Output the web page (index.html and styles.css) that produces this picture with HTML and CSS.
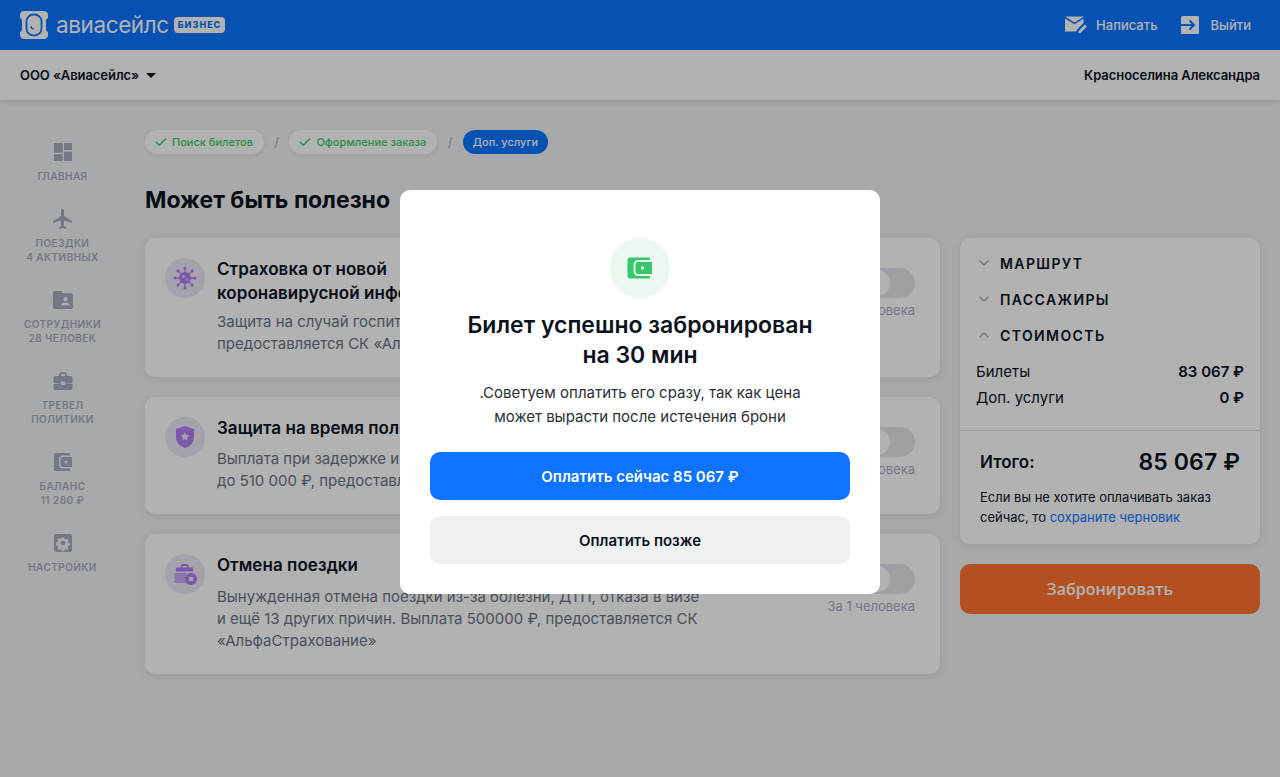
FILE: index.html
```html
<!DOCTYPE html>
<html lang="ru">
<head>
<meta charset="utf-8">
<title>Авиасейлс Бизнес</title>
<link rel="stylesheet" href="styles.css">
</head>
<body>
<header class="topbar">
  <div class="brand">
    <svg class="brand-mark" width="28" height="28" viewBox="0 0 28 28">
      <path fill="#fff" d="M4 0h20c2 0 4 1.500 4 4v3c-1.500.5-2 1.500-2 3v8c0 1.500.5 2.500 2 3v3c0 2.500-2 4-4 4H4c-2 0-4-1.500-4-4v-3c1.500-.5 2-1.500 2-3v-8c0-1.500-.5-2.500-2-3V4c0-2.500 2-4 4-4z"/>
      <rect x="6.500" y="3.500" width="15" height="21" rx="7" fill="none" stroke="#0b75ff" stroke-width="1.800"/>
      <path fill="none" stroke="#0b75ff" stroke-width="1.200" d="M11 15c0 2 1.200 3 3 3"/>
    </svg>
    <span class="brand-name">авиасейлс</span>
    <span class="brand-badge">БИЗНЕС</span>
  </div>
  <nav class="top-actions">
    <a class="top-action top-action-mail">
      <svg width="22" height="20" viewBox="0 0 22 20"><path fill="#fff" d="M0 1.500h19L9.500 7.500z"/><path fill="#fff" d="M0 3.500v13h11l1.500-2.500 6-6V3.500L9.500 9.300z"/><path fill="#fff" d="M13.500 16l6.500-6.500 2 2-6.500 6.500H13.500z"/></svg>
      <span>Написать</span>
    </a>
    <a class="top-action">
      <svg width="18" height="18" viewBox="0 0 18 18"><rect width="18" height="18" rx="1.500" fill="#fff"/><path fill="none" stroke="#0b75ff" stroke-width="2" d="M0 9h12M8.500 4.500 13 9l-4.500 4.500"/></svg>
      <span>Выйти</span>
    </a>
  </nav>
</header>

<div class="subbar">
  <div class="company">ООО «Авиасейлс» <i class="caret"></i></div>
  <div class="user">Красноселина Александра</div>
</div>

<main class="layout">
  <nav class="sidenav">
    <a class="nav-item">
      <span class="nav-icon"><svg width="18" height="18" viewBox="0 0 18 18"><path d="M0 0h8.700v9.700H0zM10 0h8v7h-8zM0 11.300h8.700V18H0zM10 8.700h8V18h-8z"/></svg></span>
      <span class="nav-label">Главная</span>
    </a>
    <a class="nav-item">
      <span class="nav-icon"><svg width="24" height="24" viewBox="0 0 24 24"><path d="M21 16v-2l-8-5V3.500c0-.83-.67-1.500-1.500-1.500S10 2.670 10 3.500V9l-8 5v2l8-2.500V19l-2 1.500V22l3.500-1 3.500 1v-1.500L13 19v-5.500l8 2.500z"/></svg></span>
      <span class="nav-label">Поездки<br>4 активных</span>
    </a>
    <a class="nav-item">
      <span class="nav-icon"><svg width="24" height="24" viewBox="0 0 24 24"><path d="M10 3l2 2.200h8c1.100 0 2 .9 2 2V19c0 1.100-.9 2-2 2H4c-1.100 0-2-.9-2-2V5c0-1.100.9-2 2-2z"/><circle class="nav-cut" cx="14.500" cy="11" r="2.200"/><path class="nav-cut" d="M10 17.500c0-2 2.500-3 4.500-3s4.500 1 4.500 3z"/></svg></span>
      <span class="nav-label">Сотрудники<br>28 человек</span>
    </a>
    <a class="nav-item">
      <span class="nav-icon"><svg width="24" height="24" viewBox="0 0 24 24"><path d="M10 16v-1H2.500v4c0 1.100.9 2 2 2h15c1.100 0 2-.9 2-2v-4H14v1zM19.500 7H16V5l-2-2h-4L8 5v2H4.500c-1.100 0-2 .9-2 2v3.500c0 1.100.9 2 2 2H10v-2h4v2h5.500c1.100 0 2-.9 2-2V9c0-1.100-.9-2-2-2zM14 7h-4V5h4z"/></svg></span>
      <span class="nav-label">Тревел<br>политики</span>
    </a>
    <a class="nav-item">
      <span class="nav-icon"><svg width="20" height="20" viewBox="0 0 20 20"><path d="M3 1h14v2.500H9.500C7.500 3.500 6 5 6 7v6c0 2 1.500 3.500 3.500 3.500H17V19H3c-1.100 0-2-.9-2-2V3c0-1.100.9-2 2-2z"/><path d="M9.500 5H19v10H9.500C8.500 15 7.500 14 7.500 13V7c0-1 1-2 2-2z"/><circle class="nav-cut" cx="13" cy="10" r="1.500"/></svg></span>
      <span class="nav-label">Баланс<br>11 280 ₽</span>
    </a>
    <a class="nav-item">
      <span class="nav-icon"><svg width="20" height="20" viewBox="0 0 20 20"><rect x="1" y="1" width="18" height="18" rx="2"/><path class="nav-cut" d="M8.700 3.500h2.600l.4 1.900 1.400.6 1.700-1 1.800 1.800-1 1.700.6 1.400 1.900.4v2.600l-1.900.4-.6 1.400 1 1.700-1.800 1.800-1.700-1-1.400.6-.4 1.900H8.700l-.4-1.900-1.400-.6-1.700 1-1.800-1.800 1-1.700-.6-1.400-1.900-.4V9.300l1.900-.4.6-1.400-1-1.700 1.800-1.800 1.700 1 1.400-.6z" transform="translate(1.400 1.400) scale(.86)"/><circle cx="10" cy="10" r="2.300"/></svg></span>
      <span class="nav-label">Настройки</span>
    </a>
  </nav>

  <section class="content">
    <ol class="crumbs">
      <li class="crumb crumb-done"><svg width="12" height="10" viewBox="0 0 12 10"><path fill="none" stroke="currentColor" stroke-width="1.500" d="M1 5l3.300 3.300L11 1.500"/></svg>Поиск билетов</li>
      <li class="crumb-sep">/</li>
      <li class="crumb crumb-done"><svg width="12" height="10" viewBox="0 0 12 10"><path fill="none" stroke="currentColor" stroke-width="1.500" d="M1 5l3.300 3.300L11 1.500"/></svg>Оформление заказа</li>
      <li class="crumb-sep">/</li>
      <li class="crumb crumb-active">Доп. услуги</li>
    </ol>

    <h1 class="page-title">Может быть полезно</h1>

    <div class="columns">
      <div class="offers">
        <article class="offer offer-tight">
          <span class="offer-icon">
            <svg width="24" height="24" viewBox="0 0 24 24"><g fill="none" stroke="#b07ff5" stroke-width="1.300"><path d="M12 1.500v21M1.500 12h21M4.600 4.600l14.800 14.800M19.400 4.600 4.600 19.400"/></g><g fill="#b07ff5"><circle cx="12" cy="12" r="6"/><circle cx="12" cy="2" r="1.600"/><circle cx="12" cy="22" r="1.600"/><circle cx="2" cy="12" r="1.600"/><circle cx="22" cy="12" r="1.600"/><circle cx="4.900" cy="4.900" r="1.600"/><circle cx="19.100" cy="4.900" r="1.600"/><circle cx="4.900" cy="19.100" r="1.600"/><circle cx="19.100" cy="19.100" r="1.600"/></g><circle cx="10.500" cy="10.500" r="1.300" fill="#eee9f6"/><circle cx="14" cy="13.500" r="1" fill="#eee9f6"/></svg>
          </span>
          <div class="offer-body">
            <h2 class="offer-title">Страховка от новой<br>коронавирусной инфекции</h2>
            <p class="offer-text">Защита на случай госпитализации с коронавирусом, выплата до 1 млн ₽,<br>предоставляется СК «АльфаСтрахование»</p>
          </div>
          <div class="offer-side"><span class="toggle"><i class="knob"></i></span><span class="offer-note">За 1 человека</span></div>
        </article>
        <article class="offer">
          <span class="offer-icon">
            <svg width="20" height="22" viewBox="0 0 20 22"><path fill="#b07ff5" d="M10 0l9 3v8c0 5.500-4 9.500-9 11-5-1.500-9-5.500-9-11V3z"/><path fill="#eee9f6" d="M10 6l1.300 3 3.200.3-2.400 2.100.7 3.100-2.800-1.600-2.800 1.600.7-3.100-2.400-2.100 3.200-.3z"/></svg>
          </span>
          <div class="offer-body">
            <h2 class="offer-title">Защита на время полёта</h2>
            <p class="offer-text">Выплата при задержке и отмене рейса, потере багажа<br>до 510 000 ₽, предоставляется СК «АльфаСтрахование»</p>
          </div>
          <div class="offer-side"><span class="toggle"><i class="knob"></i></span><span class="offer-note">За 1 человека</span></div>
        </article>
        <article class="offer offer-loose">
          <span class="offer-icon">
            <svg width="24" height="24" viewBox="0 0 24 24"><path fill="#b07ff5" d="M7.500 6.500V3.500L9 2h5l1.500 1.500V6.500H13.500V4h-4v2.500z"/><path fill="#b07ff5" d="M3 5.500h17v4H3z"/><path fill="#c9a8f8" d="M1.500 11h13a7 7 0 0 0 0 10h-13z"/><circle cx="18" cy="17" r="6" fill="#b07ff5"/><rect x="15.800" y="14.800" width="4.400" height="4.400" fill="#eee9f6"/></svg>
          </span>
          <div class="offer-body">
            <h2 class="offer-title">Отмена поездки</h2>
            <p class="offer-text">Вынужденная отмена поездки из-за болезни, ДТП, отказа в визе<br>и ещё 13 других причин. Выплата 500000 ₽, предоставляется СК<br>«АльфаСтрахование»</p>
          </div>
          <div class="offer-side"><span class="toggle"><i class="knob"></i></span><span class="offer-note">За 1 человека</span></div>
        </article>
      </div>

      <aside class="summary">
        <div class="summary-card">
          <div class="acc-list">
            <div class="acc-row"><svg width="12" height="8" viewBox="0 0 12 8"><path fill="none" stroke="#a3abb9" stroke-width="1.300" d="M1.500 1.500 6 6l4.500-4.500"/></svg>Маршрут</div>
            <div class="acc-row"><svg width="12" height="8" viewBox="0 0 12 8"><path fill="none" stroke="#a3abb9" stroke-width="1.300" d="M1.500 1.500 6 6l4.500-4.500"/></svg>Пассажиры</div>
            <div class="acc-row"><svg width="12" height="8" viewBox="0 0 12 8"><path fill="none" stroke="#a3abb9" stroke-width="1.300" d="M1.500 6.500 6 2l4.500 4.500"/></svg>Стоимость</div>
          </div>
          <dl class="costs">
            <div class="cost-row"><dt>Билеты</dt><dd>83 067 ₽</dd></div>
            <div class="cost-row"><dt>Доп. услуги</dt><dd>0 ₽</dd></div>
          </dl>
          <div class="total">
            <div class="total-row"><span class="total-label">Итого:</span><span class="total-price">85 067 ₽</span></div>
            <p class="total-note">Если вы не хотите оплачивать заказ сейчас, то <a class="link">сохраните черновик</a></p>
          </div>
        </div>
        <button class="book-btn">Забронировать</button>
      </aside>
    </div>
  </section>
</main>

<div class="overlay">
  <div class="modal">
    <span class="modal-icon">
      <svg width="26" height="24" viewBox="0 0 26 24"><path fill="#36c76b" d="M3 1.500h20V4H11C8.500 4 6.500 6 6.500 8.500v7c0 2.500 2 4.500 4.500 4.500h12v2.500H3c-1.400 0-2.500-1.100-2.500-2.500V4c0-1.400 1.100-2.500 2.500-2.500z"/><path fill="#36c76b" d="M11 6h14v12H11c-1.300 0-2.500-1.200-2.500-2.500v-7C8.500 7.200 9.700 6 11 6z"/><circle cx="15.500" cy="12" r="1.700" fill="#eaf8ef"/></svg>
    </span>
    <h2 class="modal-title">Билет успешно забронирован<br>на 30 мин</h2>
    <p class="modal-text">.Советуем оплатить его сразу, так как цена<br>может вырасти после истечения брони</p>
    <button class="modal-btn modal-btn-primary">Оплатить сейчас 85 067 ₽</button>
    <button class="modal-btn modal-btn-secondary">Оплатить позже</button>
  </div>
</div>
</body>
</html>
```

FILE: styles.css
```css
* { box-sizing: border-box; }
html, body { height: 100%; }
body {
  margin: 0;
  background: #f1f2f4;
  font-family: Inter, "Liberation Sans", sans-serif;
  color: #0c131d;
  overflow: hidden;
}
h1, h2, p, ol, dl, dd { margin: 0; padding: 0; }
ol { list-style: none; }

.topbar {
  height: 50px;
  background: #0b75ff;
  color: #fff;
  display: flex;
  align-items: center;
  justify-content: space-between;
  padding: 0 29px 0 20px;
}
.brand { display: flex; align-items: center; }
.brand-mark { display: block; flex: none; }
.brand-name {
  margin-left: 8px;
  font-size: 22.5px;
  font-weight: 400;
  letter-spacing: -.4px;
  line-height: 28px;
}
.brand-badge {
  margin-left: 5px;
  height: 16px;
  padding: 0 4px;
  background: #fff;
  color: #0b75ff;
  border-radius: 4px;
  font-size: 9px;
  font-weight: 800;
  letter-spacing: 1px;
  line-height: 16px;
}
.top-actions { display: flex; gap: 23px; }
.top-action {
  display: flex;
  align-items: center;
  gap: 12px;
  font-size: 13px;
  font-weight: 500;
  line-height: 18px;
}
.top-action-mail { gap: 9px; }

.subbar {
  position: relative;
  height: 50px;
  background: #fff;
  display: flex;
  align-items: center;
  justify-content: space-between;
  padding: 0 20px;
  font-size: 13px;
  font-weight: 600;
  letter-spacing: -.06px;
  box-shadow: 0 2px 6px rgba(80, 90, 110, .15);
}
.company { display: flex; align-items: center; gap: 7px; }
.caret {
  width: 0;
  height: 0;
  border-left: 5px solid transparent;
  border-right: 5px solid transparent;
  border-top: 5px solid #0c131d;
}

.layout { display: flex; }
.sidenav {
  width: 125px;
  flex: none;
  padding-top: 41px;
  display: flex;
  flex-direction: column;
  gap: 25px;
}
.nav-item {
  display: flex;
  flex-direction: column;
  align-items: center;
  gap: 6px;
}
.nav-icon {
  height: 22px;
  display: flex;
  align-items: center;
  justify-content: center;
}
.nav-icon svg { fill: #a5adbd; display: block; }
.nav-icon .nav-cut { fill: #f1f2f4; }
.nav-label {
  font-size: 10px;
  font-weight: 600;
  line-height: 14px;
  letter-spacing: .45px;
  text-transform: uppercase;
  text-align: center;
  color: #a5adbd;
}

.content { margin-left: 20px; width: 1115px; padding-top: 30px; }
.crumbs { display: flex; align-items: center; height: 24px; }
.crumb {
  height: 24px;
  border-radius: 12px;
  display: flex;
  align-items: center;
  font-size: 11px;
  font-weight: 500;
  padding: 0 10px;
}
.crumb-done {
  background: #fff;
  color: #3ccb72;
  gap: 5px;
  padding-right: 11px;
  box-shadow: 0 1px 4px rgba(80, 90, 110, .15);
}
.crumb-active { background: #0b75ff; color: #fff; }
.crumb-sep { color: #a5adbd; font-size: 13px; width: 25.500px; text-align: center; }

.page-title {
  margin-top: 31px;
  font-size: 23px;
  font-weight: 700;
  line-height: 30px;
}

.columns { display: flex; gap: 20px; margin-top: 23px; align-items: flex-start; }
.offers { width: 795px; display: flex; flex-direction: column; gap: 20px; }
.offer {
  background: #fff;
  border-radius: 10px;
  padding: 19px 25px 22px 20px;
  display: flex;
  box-shadow: 0 2px 8px rgba(80, 90, 110, .12);
}
.offer-icon {
  width: 40px;
  height: 40px;
  flex: none;
  border-radius: 50%;
  background: #eee9f6;
  display: flex;
  align-items: center;
  justify-content: center;
  margin-top: 1px;
}
.offer-icon svg { display: block; }
.offer-body { margin-left: 12px; flex: 1; }
.offer-title { font-size: 17px; font-weight: 600; line-height: 24px; letter-spacing: .05px; }
.offer-text {
  margin-top: 8px;
  font-size: 15px;
  line-height: 22px;
  color: #6b7280;
}
.offer-tight .offer-text { margin-top: 6px; }
.offer-loose .offer-text { margin-top: 9px; }
.offer-side {
  margin-top: 11px;
  display: flex;
  flex-direction: column;
  align-items: flex-end;
  gap: 3px;
}
.toggle {
  width: 53px;
  height: 30px;
  padding: 2px;
  border-radius: 15px;
  background: #e3e5ea;
  display: block;
}
.knob {
  display: block;
  width: 26px;
  height: 26px;
  border-radius: 50%;
  background: #fff;
}
.offer-note { font-size: 13px; line-height: 18px; color: #a5adbd; white-space: nowrap; }

.summary { width: 300px; flex: none; display: flex; flex-direction: column; gap: 20px; }
.summary-card {
  background: #fff;
  border-radius: 10px;
  padding-top: 8px;
  box-shadow: 0 2px 8px rgba(80, 90, 110, .12);
}
.acc-list { margin-top: -1px; }
.acc-row {
  height: 36px;
  padding-left: 18px;
  display: flex;
  align-items: center;
  gap: 10px;
  font-size: 14px;
  font-weight: 600;
  letter-spacing: 1.4px;
  text-transform: uppercase;
}
.costs { padding: 6px 16px 19px; }
.cost-row {
  display: flex;
  justify-content: space-between;
  font-size: 15px;
  line-height: 26px;
}
.cost-row dd { font-weight: 600; }
.total { border-top: 1px solid #dfe2e8; padding: 16px 20px 17px; }
.total-row { display: flex; justify-content: space-between; align-items: center; height: 30px; }
.total-label { font-size: 17px; font-weight: 600; }
.total-price { font-size: 23px; font-weight: 600; letter-spacing: .1px; }
.total-note { margin-top: 10px; font-size: 13px; line-height: 20px; }
.link { color: #0b75ff; }
.book-btn {
  height: 50px;
  border: 0;
  border-radius: 10px;
  background: #ff7330;
  color: #fff;
  font-family: "Open Sans", sans-serif;
  font-size: 16px;
  font-weight: 600;
}

.overlay {
  position: fixed;
  inset: 0;
  background: rgba(0, 0, 0, .3);
  display: flex;
  justify-content: center;
  align-items: flex-start;
  padding-top: 190px;
}
.modal {
  width: 480px;
  height: 404px;
  background: #fff;
  border-radius: 10px;
  padding: 48px 30px 30px;
  display: flex;
  flex-direction: column;
  align-items: center;
  text-align: center;
}
.modal-icon {
  width: 60px;
  height: 60px;
  border-radius: 50%;
  background: #eaf8ef;
  display: flex;
  align-items: center;
  justify-content: center;
}
.modal-title { margin-top: 12px; font-size: 23px; font-weight: 600; line-height: 30px; }
.modal-text { margin-top: 11px; font-size: 15px; line-height: 24px; color: #2b3038; }
.modal-btn {
  width: 100%;
  height: 48px;
  border: 0;
  border-radius: 10px;
  font-family: Inter, sans-serif;
  font-size: 15px;
  font-weight: 600;
}
.modal-btn-primary { margin-top: 23px; background: #0e73fe; color: #fff; }
.modal-btn-secondary { margin-top: 16px; background: #eff0f2; color: #0c131d; }
```
